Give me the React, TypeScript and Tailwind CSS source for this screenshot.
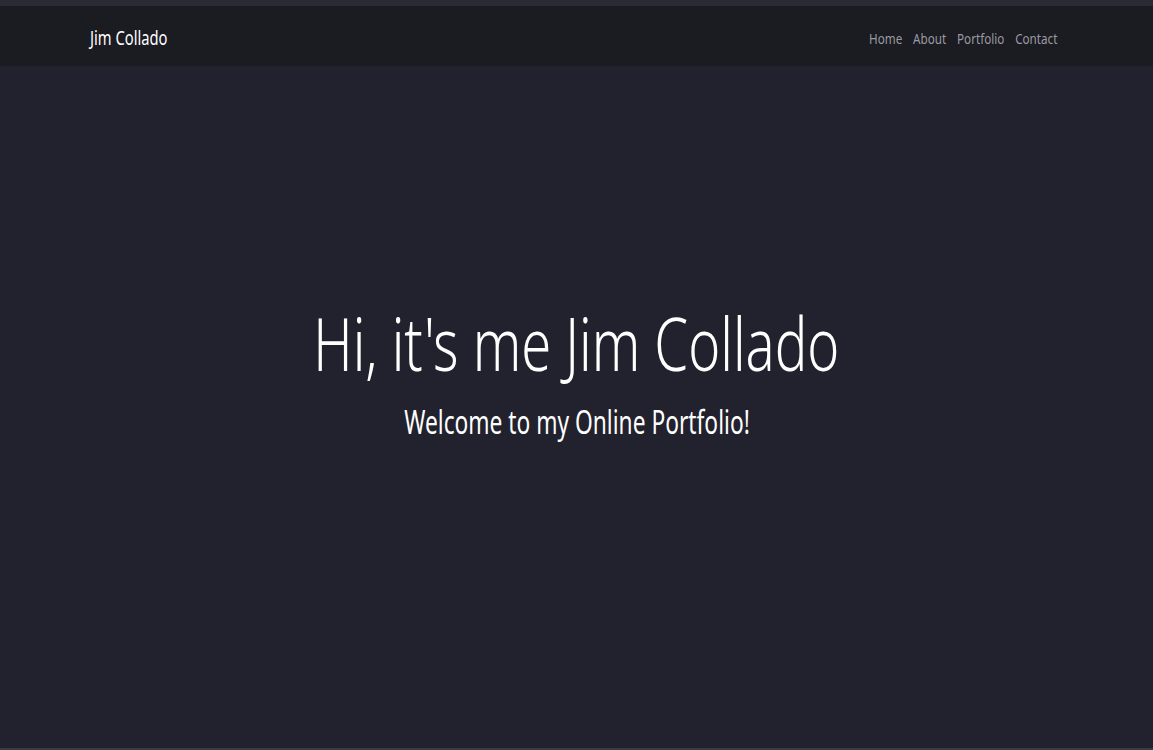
import React from "react";

export default function App() {
  const font = { fontFamily: '"Noto Sans", "Open Sans", sans-serif' };
  return (
    <div className="w-full h-[750px] flex flex-col bg-[#22222e] overflow-hidden" style={font}>
      <div className="h-[6px] bg-[#2a2934] shrink-0" />
      <nav className="h-[60px] shrink-0 bg-[#1b1b22] flex items-center justify-between pl-[90px] pr-[96px]">
        <span className="text-[20px] text-white inline-block origin-left scale-x-[0.737] translate-y-[2px]">Jim Collado</span>
        <ul className="flex gap-[14px] text-[15px] text-[#9a9aa1] origin-right scale-x-[0.777] translate-y-[2px]">
          <li>Home</li>
          <li>About</li>
          <li>Portfolio</li>
          <li>Contact</li>
        </ul>
      </nav>
      <main className="flex-1 flex flex-col items-center pt-[240px] border-b-2 border-[#3a3a42]">
        <h1 className="text-[74px] font-light leading-none text-white scale-x-[0.734] whitespace-nowrap">Hi, it's me Jim Collado</h1>
        <p className="mt-[26px] text-[32px] leading-none text-white scale-x-[0.711] whitespace-nowrap">Welcome to my Online Portfolio!</p>
      </main>
    </div>
  );
}
